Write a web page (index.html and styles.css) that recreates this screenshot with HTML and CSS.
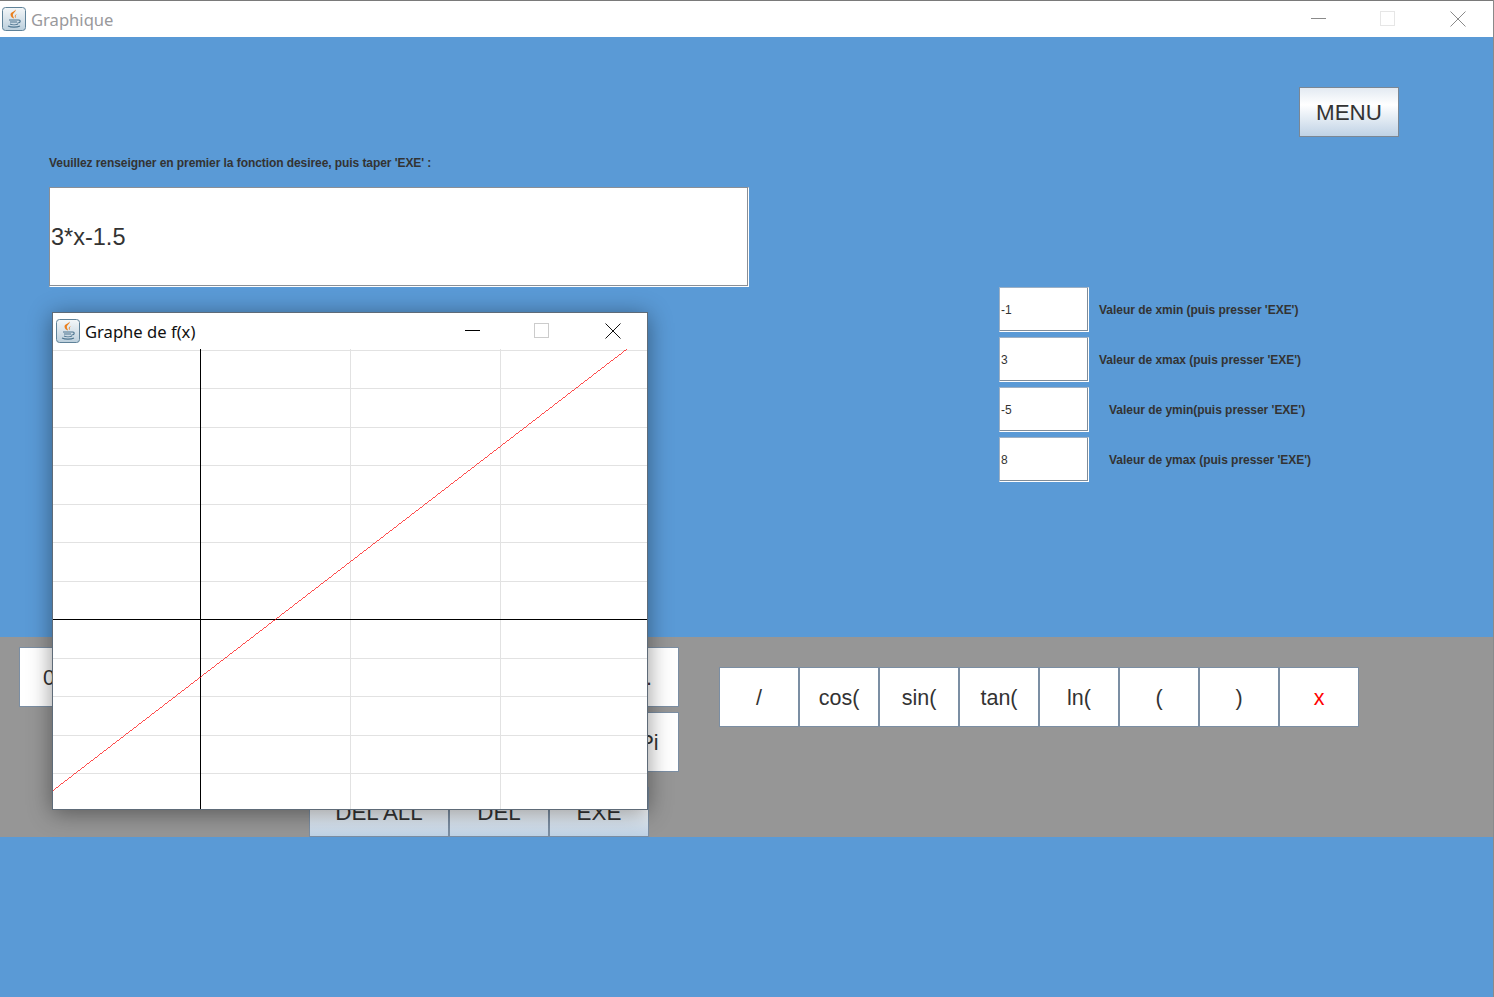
FILE: index.html
```html
<!DOCTYPE html>
<html lang="fr">
<head>
  <meta charset="UTF-8">
  <title>Graphique</title>
  <link rel="stylesheet" href="styles.css">
</head>
<body>
  <div class="frame">
    <!-- barre de titre -->
    <header class="titlebar">
      <svg class="java" viewBox="0 0 24 24">
        <defs>
          <linearGradient id="tile" x1="0" y1="0" x2="0" y2="1">
            <stop offset="0" stop-color="#f4f7f9"/>
            <stop offset="1" stop-color="#bccfdc"/>
          </linearGradient>
        </defs>
        <rect x="0.5" y="0.5" width="23" height="23" rx="3" fill="url(#tile)" stroke="#5f8299"/>
        <path d="M13.500 2.500c1 2.500-3.500 3.500-2.500 6.500.3 1 1 1.500 1 2.500-1.500-.5-3.500-1.800-3.500-4C8.500 5 12.500 5 13.500 2.500zM15.500 6.500c-1 1-2.500 1.800-1.500 4.500-1.200-.5-2-2.500.0-3.500z" fill="#ea7f1e"/>
        <path d="M7 13h9M8 15h7M8 17c2 1 6 1 8 0M6 19c3 1.500 9 1.500 12 0M16 13c3-.5 3 3-.5 3" fill="none" stroke="#4d7590" stroke-width="1.100"/>
      </svg>
      <span class="app-title">Graphique</span>
      <div class="controls">
        <svg class="ctl" viewBox="0 0 16 16"><path d="M0 7.500h15" stroke="#8a8a8a"/></svg>
        <svg class="ctl max" viewBox="0 0 16 16"><rect x="0.500" y="0.500" width="14" height="14" fill="none" stroke="#e6e6e6"/></svg>
        <svg class="ctl" viewBox="0 0 16 16"><path d="M0.500 0.500l15 15M15.500 0.500l-15 15" stroke="#8a8a8a"/></svg>
      </div>
    </header>

    <main class="top">
      <div class="menu-row">
        <button class="btn menu">MENU</button>
      </div>
      <p class="prompt">Veuillez renseigner en premier la fonction desiree, puis taper 'EXE' :</p>
      <div class="form-row">
        <div class="expr">3*x-1.5</div>
        <div class="bounds">
          <div class="bound"><div class="field">-1</div><label>Valeur de xmin (puis presser 'EXE')</label></div>
          <div class="bound"><div class="field">3</div><label>Valeur de xmax (puis presser 'EXE')</label></div>
          <div class="bound"><div class="field">-5</div><label class="far">Valeur de ymin(puis presser 'EXE')</label></div>
          <div class="bound"><div class="field">8</div><label class="far">Valeur de ymax (puis presser 'EXE')</label></div>
        </div>
      </div>
    </main>

    <!-- clavier -->
    <section class="keypad">
      <div class="keys-left">
        <div class="key-row spread">
          <button class="btn flat">0</button>
          <button class="btn flat">.</button>
        </div>
        <div class="key-row end">
          <button class="btn flat">Pi</button>
        </div>
        <div class="key-row end last">
          <button class="btn action wide">DEL ALL</button>
          <button class="btn action">DEL</button>
          <button class="btn action">EXE</button>
        </div>
      </div>
      <div class="keys-right">
        <button class="btn flat big">/</button>
        <button class="btn flat big">cos(</button>
        <button class="btn flat big">sin(</button>
        <button class="btn flat big">tan(</button>
        <button class="btn flat big">ln(</button>
        <button class="btn flat big">(</button>
        <button class="btn flat big">)</button>
        <button class="btn flat big red">x</button>
      </div>
    </section>

    <div class="bottom"></div>
  </div>

  <!-- fenetre du graphe -->
  <div class="graph-window">
    <div class="graph-title">
      <svg class="java" viewBox="0 0 24 24">
        <rect x="0.5" y="0.5" width="23" height="23" rx="3" fill="url(#tile)" stroke="#5f8299"/>
        <path d="M13.500 2.500c1 2.500-3.500 3.500-2.500 6.500.3 1 1 1.500 1 2.500-1.500-.5-3.500-1.800-3.500-4C8.500 5 12.500 5 13.500 2.500zM15.500 6.500c-1 1-2.500 1.800-1.500 4.500-1.200-.5-2-2.500.0-3.500z" fill="#ea7f1e"/>
        <path d="M7 13h9M8 15h7M8 17c2 1 6 1 8 0M6 19c3 1.500 9 1.500 12 0M16 13c3-.5 3 3-.5 3" fill="none" stroke="#4d7590" stroke-width="1.100"/>
      </svg>
      <span>Graphe de f(x)</span>
      <div class="controls inner">
        <svg class="ctl" viewBox="0 0 16 16"><path d="M0 7.500h15" stroke="#000"/></svg>
        <svg class="ctl max" viewBox="0 0 16 16"><rect x="0.500" y="0.500" width="14" height="14" fill="none" stroke="#ccc"/></svg>
        <svg class="ctl" viewBox="0 0 16 16"><path d="M0.500 0.500l15 15M15.500 0.500l-15 15" stroke="#111"/></svg>
      </div>
    </div>
    <svg class="plot" viewBox="0 0 594 460" shape-rendering="crispEdges">
      <g stroke="#e2e2e2">
        <path d="M0 1.500h594M0 39.500h594M0 78.500h594M0 116.500h594M0 155.500h594M0 193.500h594M0 232.500h594M0 309.500h594M0 347.500h594M0 386.500h594M0 424.500h594"/>
        <path d="M297.500 0v460M447.500 0v460"/>
      </g>
      <path d="M0 270.500h594M147.500 0v460" stroke="#000"/>
      <path d="M0 441.500L574 0" stroke="#ff0000" stroke-width="0.700" fill="none"/>
    </svg>
  </div>
</body>
</html>
```

FILE: styles.css
```css
* {
  box-sizing: border-box;
}
html, body {
  margin: 0;
  height: 100%;
  overflow: hidden;
}
body {
  font-family: "Liberation Sans", Arial, sans-serif;
  color: #333;
  background-color: #5a9ad6;
}
.frame {
  height: 997px;
  display: flex;
  flex-direction: column;
  border-right: 1px solid #8a8a8a;
}

/* barre de titre */
.titlebar {
  height: 37px;
  flex-shrink: 0;
  background-color: #fff;
  border-top: 1px solid #7a7a7a;
  display: flex;
  align-items: center;
  padding-left: 2px;
}
.java {
  width: 24px;
  height: 24px;
  flex-shrink: 0;
}
.app-title {
  margin-left: 5px;
  font-family: "Noto Sans", sans-serif;
  font-size: 16.6px;
  color: #99999c;
}
.controls {
  margin-left: auto;
  display: flex;
  gap: 53px;
  padding-right: 27px;
}
.controls .max {
  margin-right: 1px;
}
.controls.inner {
  padding-right: 26px;
}
.controls.inner .max {
  margin-right: 2px;
}
.ctl {
  width: 16px;
  height: 16px;
  display: block;
}

/* haut */
.top {
  height: 600px;
  flex-shrink: 0;
  padding-top: 50px;
}
.menu-row {
  display: flex;
  justify-content: flex-end;
  padding-right: 94px;
}
.prompt {
  margin: 19px 0 0 49px;
  font-size: 12px;
  line-height: 14px;
  font-weight: bold;
  letter-spacing: -0.07px;
}
.form-row {
  display: flex;
  margin: 17px 0 0 49px;
}
.expr {
  width: 700px;
  height: 100px;
  background-color: #fff;
  border: 1px solid #fff;
  border-top-color: #8a8f96;
  border-left-color: #8a8f96;
  box-shadow: inset -1px -1px 0 #8a8f96;
  display: flex;
  align-items: center;
  padding-left: 1px;
  font-size: 23.5px;
}
.bounds {
  margin: 100px 0 0 250px;
  display: flex;
  flex-direction: column;
  gap: 5px;
}
.bound {
  display: flex;
  align-items: center;
}
.field {
  width: 90px;
  height: 45px;
  background-color: #fff;
  border: 1px solid #fff;
  border-top-color: #9db0c4;
  border-left-color: #9db0c4;
  box-shadow: inset -1px -1px 0 #7f8c99;
  display: flex;
  align-items: center;
  padding-left: 1px;
  font-size: 12px;
}
.bound label {
  margin-left: 10px;
  font-size: 12px;
  font-weight: bold;
  letter-spacing: -0.03px;
}
.bound label.far {
  margin-left: 20px;
}

/* clavier */
.keypad {
  height: 200px;
  flex-shrink: 0;
  background-color: #969696;
  display: flex;
  padding: 10px 0 0 19px;
}
.keys-left {
  width: 660px;
  display: flex;
  flex-direction: column;
  gap: 5px;
}
.key-row {
  display: flex;
}
.key-row.spread {
  justify-content: space-between;
}
.key-row.end {
  justify-content: flex-end;
}
.key-row.last {
  padding-right: 30px;
  margin-top: 10px;
}
.keys-right {
  margin: 20px 0 0 40px;
  display: flex;
  align-self: flex-start;
}
.btn {
  font-family: "Liberation Sans", Arial, sans-serif;
  font-size: 21.5px;
  color: #333;
  padding: 2px 0 0;
  width: 60px;
  height: 60px;
  background: #fff;
  border: 1px solid #7b8ea3;
}
.btn.menu {
  width: 100px;
  height: 50px;
  font-size: 22.4px;
  background: linear-gradient(#e3eaf2 0%, #fff 35%, #bfd2e5 100%);
  border: 1px solid #7b8794;
}
.btn.flat.big {
  width: 80px;
}
.btn.red {
  color: #f00;
}
.btn.action {
  width: 100px;
  height: 50px;
  font-size: 22.4px;
  background: linear-gradient(#e3eaf2 0%, #fff 35%, #bfd2e5 100%);
}
.btn.action.wide {
  width: 140px;
}

/* fenetre du graphe */
.graph-window {
  position: absolute;
  left: 52px;
  top: 312px;
  width: 596px;
  height: 498px;
  background-color: #fff;
  border: 1px solid #5e6b78;
  box-shadow: 0 3px 22px rgba(0, 0, 0, 0.42);
  display: flex;
  flex-direction: column;
}
.graph-title {
  height: 36px;
  flex-shrink: 0;
  display: flex;
  align-items: center;
  padding-left: 3px;
  font-family: "Noto Sans", sans-serif;
  font-size: 16.6px;
  color: #111;
}
.graph-title span {
  margin-left: 5px;
}
.plot {
  width: 594px;
  height: 460px;
  flex-shrink: 0;
  display: block;
}
```
